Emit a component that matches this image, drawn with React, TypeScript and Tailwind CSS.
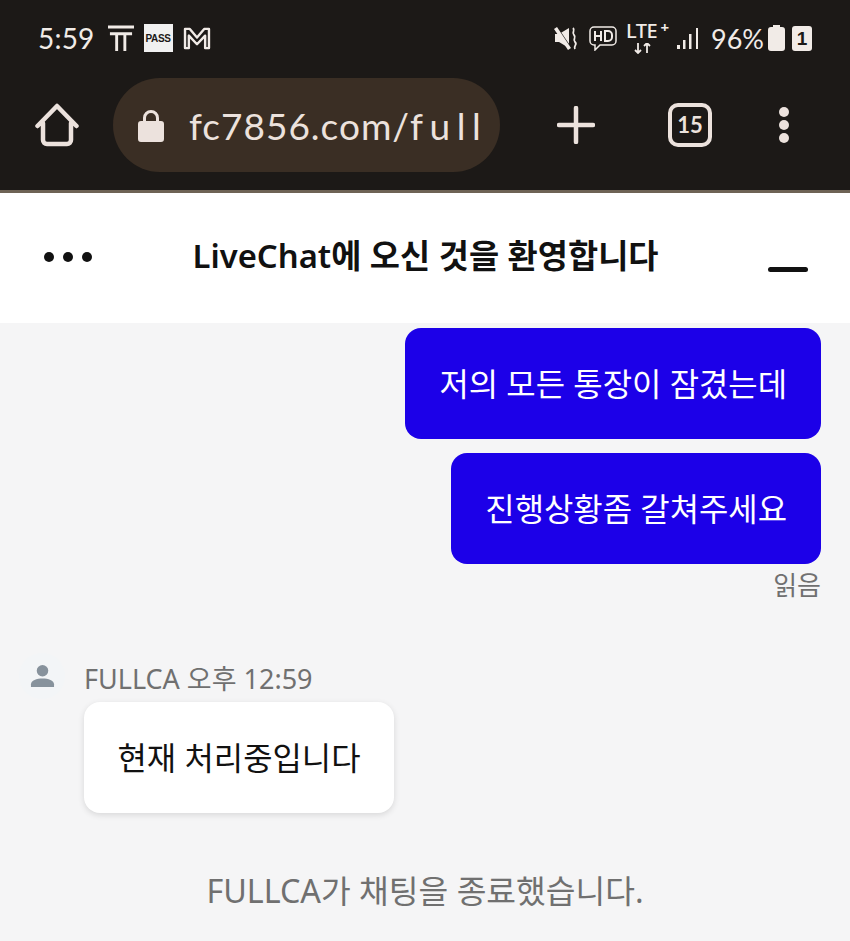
const sans = "font-['Noto_Sans','Noto_Sans_CJK_KR',sans-serif]";

function StatusBar() {
  return (
    <div className="flex h-[78px] items-center justify-between pb-[2px] pl-[38px] pr-[38px] text-[#f1ebe7]">
      <div className="flex items-center gap-[13px]">
        <span className="font-['Lato',sans-serif] text-[28px] leading-none tracking-[0.2px]">5:59</span>
        <div className="flex items-center gap-[10px]">
          <svg width="26" height="27" viewBox="0 0 27 28" fill="none" stroke="currentColor" strokeWidth="3">
            <path d="M0 2h27M2 9h23M9 9v18M17.500 9v18" />
          </svg>
          <div className="flex h-[28px] w-[29px] items-center justify-center bg-[#f1f1f1] font-['Liberation_Sans',sans-serif] text-[10px] font-bold tracking-[-0.4px] text-[#1c1917]">
            PASS
          </div>
          <svg width="28" height="23" viewBox="0 0 29 24" fill="none" stroke="currentColor" strokeWidth="2.500" strokeLinejoin="round">
            <path d="M2 2h5l7.500 9L22 2h5v20h-4V9l-8.500 9L6 9v13H2z" />
          </svg>
        </div>
      </div>
      <div className="flex items-center">
        <svg className="mr-[11px]" width="24" height="23" viewBox="0 0 24 23" fill="currentColor">
          <path d="M1 7h4l10-6v20L5 15H1z" />
          <path d="M2 0l15 22" fill="none" stroke="#1c1917" strokeWidth="2.500" />
          <path d="M0 2l3-2 14 21-3 2z" />
          <path d="M19 1c3 3-2 4 1 7s-2 4 1 7-2 3 0 7" fill="none" stroke="currentColor" strokeWidth="1.800" />
        </svg>
        <svg className="mr-[9px]" width="28" height="25" viewBox="0 0 28 25" fill="none" stroke="currentColor" strokeWidth="1.500">
          <path d="M5 1h18a4 4 0 0 1 4 4v10a4 4 0 0 1-4 4H11l-5 5v-5H5a4 4 0 0 1-4-4V5a4 4 0 0 1 4-4z" />
          <path d="M6 5v10M12 5v10M6 10h6M16 5v10h3a4 4 0 0 0 4-4V9a4 4 0 0 0-4-4z" strokeWidth="2" />
        </svg>
        <div className="relative mr-[9px] h-[26px] w-[42px] font-['Noto_Sans',sans-serif] text-[20px] font-medium leading-none">
          <span className="absolute left-0 top-[-4px] tracking-[-0.5px]">LTE</span>
          <span className="absolute right-[-1px] top-[-5px] text-[15px] font-bold">+</span>
          <svg className="absolute bottom-[-3px] left-[8px]" width="18" height="11" viewBox="0 0 18 11" fill="none" stroke="currentColor" strokeWidth="1.800">
            <path d="M4 0v10M1 7l3 3 3-3M13 10V0M10 3l3-3 3 3" />
          </svg>
        </div>
        <svg className="mr-[13px]" width="21" height="23" viewBox="0 0 21 23" fill="currentColor">
          <rect x="0" y="18" width="3" height="4" />
          <rect x="6" y="13" width="2.500" height="9" />
          <rect x="12" y="7" width="2.500" height="15" />
          <rect x="19" y="1" width="2" height="21" />
        </svg>
        <span className="font-['Lato',sans-serif] text-[27px] leading-none">96%</span>
        <svg className="ml-[4px] mr-[7px]" width="17" height="26" viewBox="0 0 17 26" fill="currentColor">
          <path d="M5 0h7v2h2a3 3 0 0 1 3 3v18a3 3 0 0 1-3 3H3a3 3 0 0 1-3-3V5a3 3 0 0 1 3-3h2z" />
        </svg>
        <div className="flex h-[25px] w-[20px] items-center justify-center rounded-[3px] bg-[#f1ebe7] font-['Liberation_Sans',sans-serif] text-[19px] font-bold leading-none text-[#1c1917]">
          1
        </div>
      </div>
    </div>
  );
}

function Toolbar() {
  return (
    <div className="flex h-[94px] items-center text-[#ece2dd]">
      <div className="flex w-[113px] justify-center">
        <svg width="44" height="44" viewBox="0 0 44 44" fill="none" stroke="currentColor" strokeWidth="4.500" strokeLinejoin="round" strokeLinecap="round">
          <path d="M2.500 23 22 3l19.500 20M8 20v17a4 4 0 0 0 4 4h20a4 4 0 0 0 4-4V20" />
        </svg>
      </div>
      <div className="flex h-[94px] w-[387px] items-center overflow-hidden rounded-full bg-[#3a2e24] pl-[25px]">
        <svg width="26" height="33" viewBox="0 0 26 33" fill="currentColor" className="shrink-0">
          <path d="M3 12h2V9a8 8 0 0 1 16 0v3h2a3 3 0 0 1 3 3v15a3 3 0 0 1-3 3H3a3 3 0 0 1-3-3V15a3 3 0 0 1 3-3zm5 0h10V9a5 5 0 0 0-10 0z" />
        </svg>
        <span className="ml-[25px] w-[293px] overflow-hidden whitespace-nowrap font-['Lato',sans-serif] text-[37px] leading-none tracking-[1px]">
          fc7856.com/<span className="tracking-[6.500px]">fullca</span>
        </span>
      </div>
      <div className="flex w-[152px] justify-center">
        <svg width="38" height="38" viewBox="0 0 38 38" fill="none" stroke="currentColor" strokeWidth="4.500" strokeLinecap="round">
          <path d="M19 2v34M2 19h34" />
        </svg>
      </div>
      <div className="ml-[16px] flex h-[44px] w-[44px] items-center justify-center rounded-[10px] border-[4px] border-[#ece2dd] font-['Lato',sans-serif] text-[22px] font-bold leading-none">
        15
      </div>
      <div className="ml-[67px] flex flex-col gap-[3px]">
        <div className="h-[10px] w-[10px] rounded-full bg-[#ece2dd]" />
        <div className="h-[10px] w-[10px] rounded-full bg-[#ece2dd]" />
        <div className="h-[10px] w-[10px] rounded-full bg-[#ece2dd]" />
      </div>
    </div>
  );
}

function ChatHeader() {
  return (
    <div className="flex h-[130px] items-center justify-between bg-white pl-[44px] pr-[42px]">
      <div className="mb-[2px] flex gap-[9px]">
        <div className="h-[10px] w-[10px] rounded-full bg-[#111]" />
        <div className="h-[10px] w-[10px] rounded-full bg-[#111]" />
        <div className="h-[10px] w-[10px] rounded-full bg-[#111]" />
      </div>
      <h1 className="mb-[4px] mr-[9px] text-[32.8px] font-semibold leading-none text-[#111]">LiveChat에 오신 것을 환영합니다</h1>
      <div className="mt-[22px] h-[5px] w-[40px] rounded-full bg-[#111]" />
    </div>
  );
}

function VisitorBubble({ text }: { text: string }) {
  return (
    <div className="flex h-[111px] items-center rounded-[16px] bg-[#1c00e8] px-[34px] text-[31.9px] leading-none text-white">
      {text}
    </div>
  );
}

export default function App() {
  return (
    <div className={`flex h-[941px] w-[850px] flex-col overflow-hidden bg-[#f5f5f6] ${sans}`}>
      <div className="h-[193px] shrink-0 border-b-[3px] border-[#6e6355] bg-[#1c1917]">
        <StatusBar />
        <Toolbar />
      </div>
      <ChatHeader />
      <div className="flex flex-col pt-[5px]">
        <div className="flex flex-col items-end gap-[14px] pr-[29px]">
          <VisitorBubble text="저의 모든 통장이 잠겼는데" />
          <VisitorBubble text="진행상황좀 갈쳐주세요" />
        </div>
        <div className="mt-[3px] pr-[29px] text-right text-[26px] leading-[36px] text-[#707070]">읽음</div>

        <div className="mt-[56px] flex pl-[19px]">
          <div className="-mt-[6px] flex h-[46px] w-[46px] shrink-0 items-center justify-center rounded-full bg-[#f3f5f7]">
            <svg width="25" height="25" viewBox="0 0 26 26" fill="#87929c">
              <circle cx="13" cy="7" r="6" />
              <path d="M1 24v-3c0-4 6-6 12-6s12 2 12 6v3z" />
            </svg>
          </div>
          <div className="ml-[19px]">
            <div className="h-[43px] text-[27px] leading-[39px] text-[#707070]">FULLCA 오후 12:59</div>
            <div className="flex h-[111px] items-center rounded-[16px] bg-white px-[33.500px] text-[31.9px] leading-none text-[#111] shadow-[0_2px_6px_rgba(0,0,0,0.12)]">
              현재 처리중입니다
            </div>
          </div>
        </div>

        <div className="mt-[55px] text-center text-[32.3px] leading-[44px] text-[#707070]">FULLCA가 채팅을 종료했습니다.</div>
      </div>
    </div>
  );
}
